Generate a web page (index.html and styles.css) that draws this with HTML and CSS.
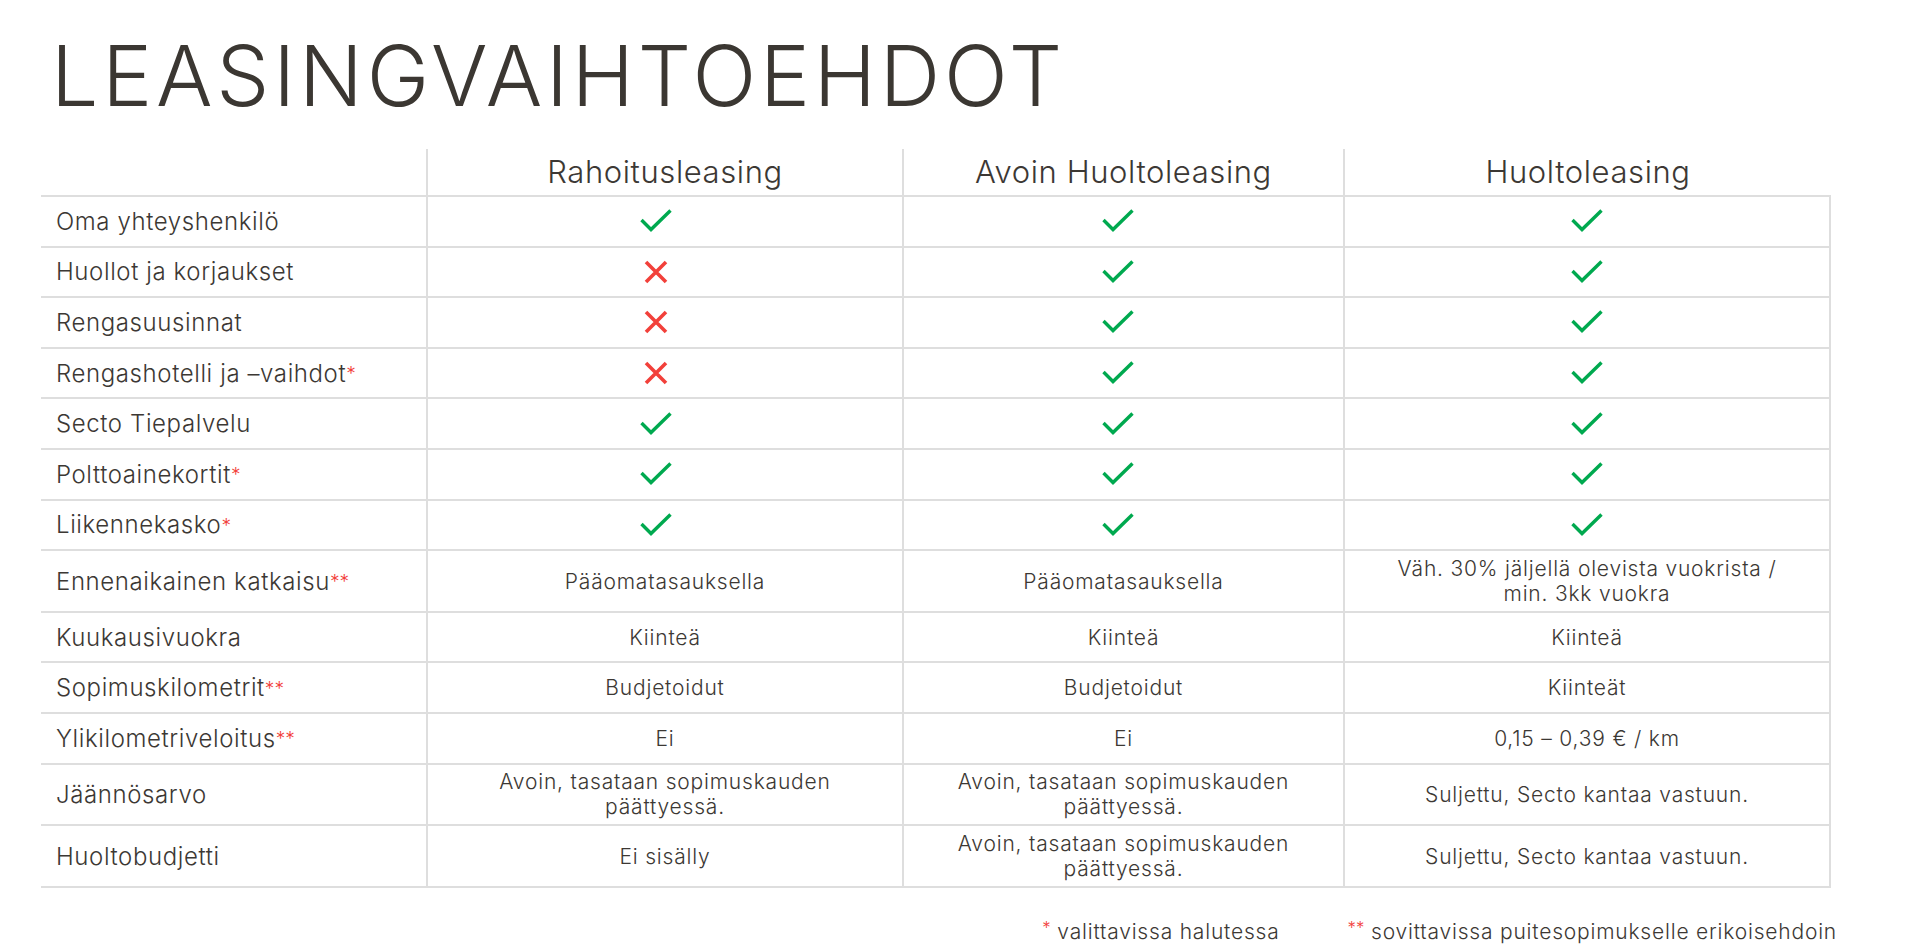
FILE: index.html
```html
<!DOCTYPE html>
<html lang="fi">
<head>
<meta charset="utf-8">
<title>Leasingvaihtoehdot</title>
<link rel="stylesheet" href="styles.css">
</head>
<body>
<div class="page">
  <h1 class="title">LEASINGVAIHTOEHDOT</h1>

  <div class="table">
    <div class="row head">
      <div class="cell label"></div>
      <div class="cell">Rahoitusleasing</div>
      <div class="cell">Avoin Huoltoleasing</div>
      <div class="cell last">Huoltoleasing</div>
    </div>

    <div class="row">
      <div class="cell label">Oma yhteyshenkilö</div>
      <div class="cell"><svg class="ic yes" viewBox="0 0 32 24"><polyline points="1.5,11 11,20.5 30.5,1.5"/></svg></div>
      <div class="cell"><svg class="ic yes" viewBox="0 0 32 24"><polyline points="1.5,11 11,20.5 30.5,1.5"/></svg></div>
      <div class="cell"><svg class="ic yes" viewBox="0 0 32 24"><polyline points="1.5,11 11,20.5 30.5,1.5"/></svg></div>
    </div>
    <div class="row">
      <div class="cell label">Huollot ja korjaukset</div>
      <div class="cell"><svg class="ic no" viewBox="0 0 24 24"><path d="M2 2 L22 22 M22 2 L2 22"/></svg></div>
      <div class="cell"><svg class="ic yes" viewBox="0 0 32 24"><polyline points="1.5,11 11,20.5 30.5,1.5"/></svg></div>
      <div class="cell"><svg class="ic yes" viewBox="0 0 32 24"><polyline points="1.5,11 11,20.5 30.5,1.5"/></svg></div>
    </div>
    <div class="row">
      <div class="cell label">Rengasuusinnat</div>
      <div class="cell"><svg class="ic no" viewBox="0 0 24 24"><path d="M2 2 L22 22 M22 2 L2 22"/></svg></div>
      <div class="cell"><svg class="ic yes" viewBox="0 0 32 24"><polyline points="1.5,11 11,20.5 30.5,1.5"/></svg></div>
      <div class="cell"><svg class="ic yes" viewBox="0 0 32 24"><polyline points="1.5,11 11,20.5 30.5,1.5"/></svg></div>
    </div>
    <div class="row">
      <div class="cell label">Rengashotelli ja –vaihdot<span class="star">*</span></div>
      <div class="cell"><svg class="ic no" viewBox="0 0 24 24"><path d="M2 2 L22 22 M22 2 L2 22"/></svg></div>
      <div class="cell"><svg class="ic yes" viewBox="0 0 32 24"><polyline points="1.5,11 11,20.5 30.5,1.5"/></svg></div>
      <div class="cell"><svg class="ic yes" viewBox="0 0 32 24"><polyline points="1.5,11 11,20.5 30.5,1.5"/></svg></div>
    </div>
    <div class="row">
      <div class="cell label">Secto Tiepalvelu</div>
      <div class="cell"><svg class="ic yes" viewBox="0 0 32 24"><polyline points="1.5,11 11,20.5 30.5,1.5"/></svg></div>
      <div class="cell"><svg class="ic yes" viewBox="0 0 32 24"><polyline points="1.5,11 11,20.5 30.5,1.5"/></svg></div>
      <div class="cell"><svg class="ic yes" viewBox="0 0 32 24"><polyline points="1.5,11 11,20.5 30.5,1.5"/></svg></div>
    </div>
    <div class="row">
      <div class="cell label">Polttoainekortit<span class="star">*</span></div>
      <div class="cell"><svg class="ic yes" viewBox="0 0 32 24"><polyline points="1.5,11 11,20.5 30.5,1.5"/></svg></div>
      <div class="cell"><svg class="ic yes" viewBox="0 0 32 24"><polyline points="1.5,11 11,20.5 30.5,1.5"/></svg></div>
      <div class="cell"><svg class="ic yes" viewBox="0 0 32 24"><polyline points="1.5,11 11,20.5 30.5,1.5"/></svg></div>
    </div>
    <div class="row">
      <div class="cell label">Liikennekasko<span class="star">*</span></div>
      <div class="cell"><svg class="ic yes" viewBox="0 0 32 24"><polyline points="1.5,11 11,20.5 30.5,1.5"/></svg></div>
      <div class="cell"><svg class="ic yes" viewBox="0 0 32 24"><polyline points="1.5,11 11,20.5 30.5,1.5"/></svg></div>
      <div class="cell"><svg class="ic yes" viewBox="0 0 32 24"><polyline points="1.5,11 11,20.5 30.5,1.5"/></svg></div>
    </div>
    <div class="row tall">
      <div class="cell label">Ennenaikainen katkaisu<span class="star">**</span></div>
      <div class="cell">Pääomatasauksella</div>
      <div class="cell">Pääomatasauksella</div>
      <div class="cell">Väh. 30% jäljellä olevista vuokrista /<br>min. 3kk vuokra</div>
    </div>
    <div class="row">
      <div class="cell label">Kuukausivuokra</div>
      <div class="cell">Kiinteä</div>
      <div class="cell">Kiinteä</div>
      <div class="cell">Kiinteä</div>
    </div>
    <div class="row">
      <div class="cell label">Sopimuskilometrit<span class="star">**</span></div>
      <div class="cell">Budjetoidut</div>
      <div class="cell">Budjetoidut</div>
      <div class="cell">Kiinteät</div>
    </div>
    <div class="row">
      <div class="cell label">Ylikilometriveloitus<span class="star">**</span></div>
      <div class="cell">Ei</div>
      <div class="cell">Ei</div>
      <div class="cell">0,15 – 0,39 € / km</div>
    </div>
    <div class="row tall">
      <div class="cell label">Jäännösarvo</div>
      <div class="cell">Avoin, tasataan sopimuskauden<br>päättyessä.</div>
      <div class="cell">Avoin, tasataan sopimuskauden<br>päättyessä.</div>
      <div class="cell">Suljettu, Secto kantaa vastuun.</div>
    </div>
    <div class="row tall">
      <div class="cell label">Huoltobudjetti</div>
      <div class="cell">Ei sisälly</div>
      <div class="cell">Avoin, tasataan sopimuskauden<br>päättyessä.</div>
      <div class="cell">Suljettu, Secto kantaa vastuun.</div>
    </div>
  </div>

  <div class="notes">
    <span class="note"><span class="star">*</span> valittavissa halutessa</span>
    <span class="note"><span class="star">**</span> sovittavissa puitesopimukselle erikoisehdoin</span>
  </div>
</div>
</body>
</html>
```

FILE: styles.css
```css
* { box-sizing: border-box; }

html, body {
  margin: 0;
  padding: 0;
  background: #ffffff;
}

body {
  font-family: Inter, "Noto Sans", "Liberation Sans", sans-serif;
  font-weight: 300;
  color: #3c3834;
}

.page {
  width: 1913px;
  padding-top: 34px;
}

.title {
  margin: 0 0 31px 51px;
  font-size: 84px;
  line-height: 84px;
  font-weight: 300;
  letter-spacing: 3.8px;
  color: #3b3732;
}

.table {
  margin-left: 41px;
  width: 1790px;
}

.row {
  display: grid;
  grid-template-columns: 387px 476px 441px 486px;
  height: 50.6px;
  border-bottom: 2px solid #dedede;
}

.row.tall { height: 61.7px; }

.row.head {
  height: 48px;
}

.cell {
  display: flex;
  align-items: center;
  justify-content: center;
  text-align: center;
  border-right: 2px solid #dedede;
  font-size: 21px;
  line-height: 25px;
  letter-spacing: 0.8px;
}

.row.head .cell {
  font-size: 31px;
  line-height: 36px;
  letter-spacing: 0.6px;
}

.row.head .cell.last { border-right: 0; }

.cell.label {
  justify-content: flex-start;
  text-align: left;
  padding-left: 15px;
  font-size: 24px;
  letter-spacing: 0.6px;
}

.star {
  color: #f2403a;
  font-size: 0.8em;
  vertical-align: 0.32em;
  line-height: 0;
  letter-spacing: 0;
}

.ic {
  display: block;
  fill: none;
  stroke-linecap: butt;
}

.row .cell:nth-child(2) .ic { margin-right: 18px; }
.row .cell:nth-child(3) .ic { margin-right: 12px; }

.ic.yes {
  width: 32px;
  height: 24px;
  stroke: #00a94f;
  stroke-width: 3.4;
}

.ic.no {
  width: 24px;
  height: 24px;
  stroke: #f2403a;
  stroke-width: 3.6;
}

.notes {
  display: flex;
  justify-content: flex-end;
  gap: 68px;
  margin-top: 31px;
  margin-right: 76px;
  font-size: 21px;
  line-height: 25px;
  letter-spacing: 0.8px;
}
```
